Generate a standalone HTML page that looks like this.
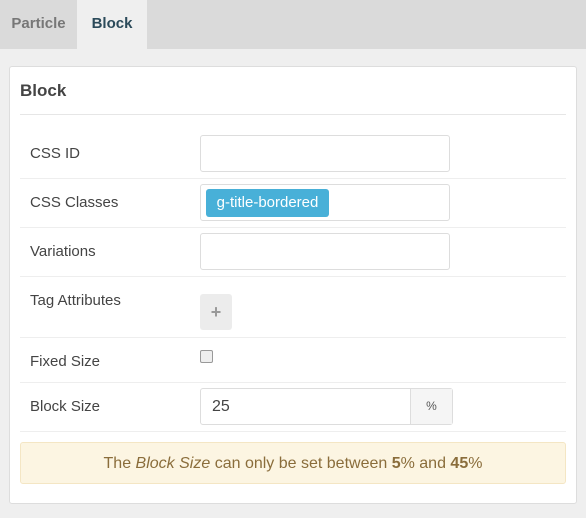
<!DOCTYPE html><html><head><style>
body{margin:0;width:586px;height:518px;background:#efefef;font-family:"Liberation Sans",sans-serif;position:relative;overflow:hidden;color:#444}
.a{position:absolute}
.tabs{left:0;top:0;width:586px;height:49px;background:#dadada}
.inp{position:absolute;left:200px;width:248px;height:35px;border:1px solid #ddd;border-radius:3px;background:#fff}
.lbl{position:absolute;left:30px;font-size:15px;color:#444}
.hr{position:absolute;left:20px;width:546px;height:1px;background:#eee}
</style></head><body>
<div class="a tabs"></div>
<div class="a" style="left:0;top:0;width:77px;height:49px;line-height:47px;text-align:center;font-size:15px;color:#777;font-weight:bold">Particle</div>
<div class="a" style="left:77px;top:0;width:70px;height:49px;background:#efefef;line-height:47px;text-align:center;font-size:15px;color:#2b4a5a;font-weight:bold">Block</div>
<div class="a" style="left:9px;top:66px;width:566px;height:436px;background:#fff;border:1px solid #ddd;border-radius:3px"></div>
<div class="a" style="left:20px;top:81px;font-size:17px;color:#444;font-weight:bold">Block</div>
<div class="hr" style="top:114px;background:#e6e6e6"></div>
<div class="lbl" style="top:145px">CSS ID</div>
<div class="inp" style="top:135px"></div>
<div class="hr" style="top:178px"></div>
<div class="lbl" style="top:194px">CSS Classes</div>
<div class="inp" style="top:184px"></div>
<div class="a" style="left:206px;top:189px;width:123px;height:28px;background:#48b0d8;border-radius:3px;color:#fff;font-size:15px;line-height:28px;text-align:center">g-title-bordered</div>
<div class="hr" style="top:227px"></div>
<div class="lbl" style="top:243px">Variations</div>
<div class="inp" style="top:233px"></div>
<div class="hr" style="top:276px"></div>
<div class="lbl" style="top:292px">Tag Attributes</div>
<div class="a" style="left:200px;top:294px;width:32px;height:36px;background:#ececec;border-radius:3px;color:#999;font-size:18px;font-weight:bold;text-align:center;line-height:36px">+</div>
<div class="hr" style="top:337px"></div>
<div class="lbl" style="top:353px">Fixed Size</div>
<div class="a" style="left:200px;top:350px;width:11px;height:11px;border:1px solid #999;border-radius:2px;background:#eee"></div>
<div class="hr" style="top:382px"></div>
<div class="lbl" style="top:398px">Block Size</div>
<div class="a" style="left:200px;top:388px;width:251px;height:35px;border:1px solid #ddd;border-radius:3px;background:#fff"></div>
<div class="a" style="left:410px;top:389px;width:41px;height:35px;background:#f5f5f5;border-left:1px solid #ddd;font-size:12px;text-align:center;line-height:35px;color:#555">%</div>
<div class="a" style="left:212px;top:398px;font-size:16px;color:#444">25</div>
<div class="hr" style="top:431px"></div>
<div class="a" style="left:20px;top:442px;width:544px;height:40px;background:#fcf5e2;border:1px solid #f4e6c4;border-radius:3px;color:#8a6d3b;font-size:16px;text-align:center;line-height:42px">The <i>Block Size</i> can only be set between <b>5</b>% and <b>45</b>%</div>
</body></html>
